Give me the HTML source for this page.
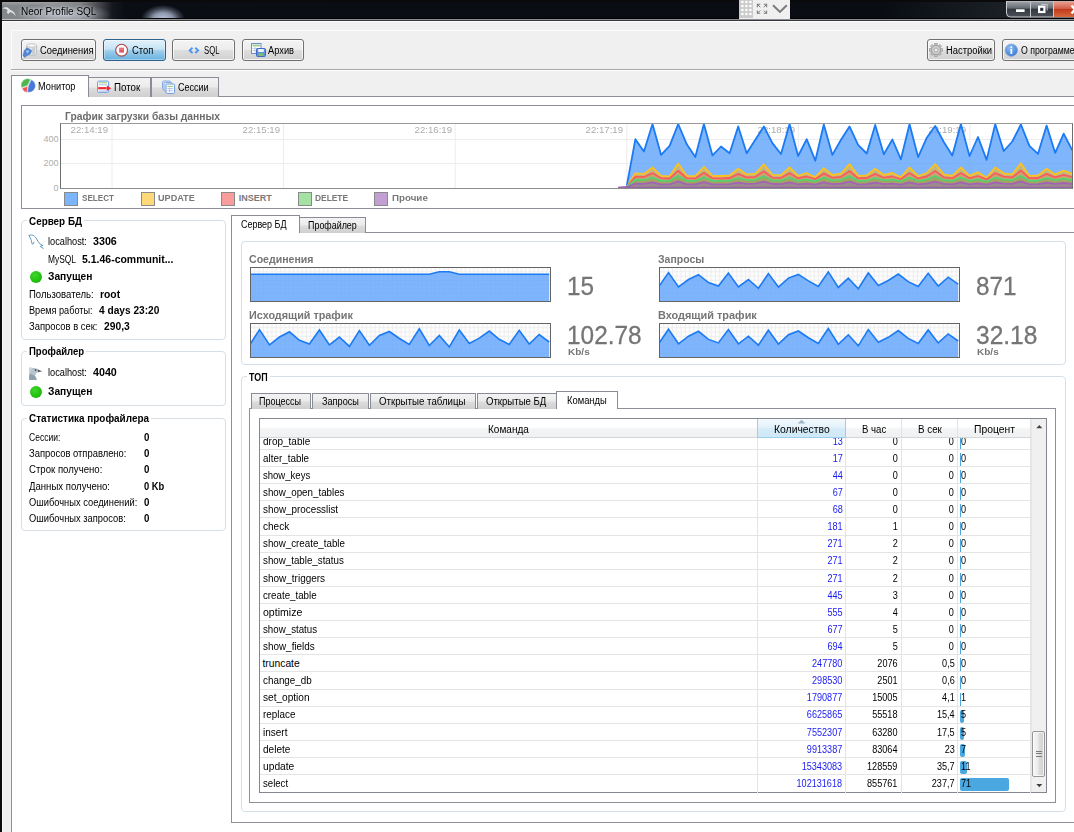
<!DOCTYPE html>
<html lang="ru"><head><meta charset="utf-8"><title>Neor Profile SQL</title>
<style>
html,body{margin:0;padding:0}
body{width:1074px;height:832px;overflow:hidden;position:relative;background:#f0f0f0;font-family:"Liberation Sans",sans-serif;font-size:10px;color:#000}
div,svg{position:absolute;box-sizing:border-box}
.t{position:absolute;white-space:nowrap;line-height:0;height:20px;display:block}
.t:before{content:"";display:inline-block;height:20px;width:0}
.btn{border:1px solid #707070;border-radius:3px;background:linear-gradient(#f4f4f4 0,#ececec 48%,#dedede 52%,#d1d1d1 100%);box-shadow:inset 0 0 0 1px rgba(255,255,255,.75)}
.btnhot{border:1px solid #2c628b;border-radius:3px;background:linear-gradient(#e4f2fb 0,#c6e3f6 45%,#9ccdec 55%,#6ab1dd 100%);box-shadow:inset 0 0 0 1px rgba(255,255,255,.35)}
.tab{border:1px solid #898c95;border-bottom:none;background:linear-gradient(#f3f3f3 0,#ebebeb 48%,#dddddd 52%,#cfcfcf 100%)}
.tabon{border:1px solid #898c95;border-bottom:none;background:#fff}
.grp{border:1px solid #d6dfe6;border-radius:4px}
.gt{background:#fff}
.sec{left:0;top:0;width:1074px;height:832px}
</style></head>
<body>
<div id="titlebar" class="sec">
<div style="left:0px;top:0px;width:1074px;height:19px;background:linear-gradient(to right,#84878a 0,#828589 55px,#76797d 80px,#4a4b4f 98px,#15181f 112px,#0a0d14 125px,#090c13 880px,#1a1e25 1000px,#1c2027 100%)"></div>
<div style="left:0px;top:2px;width:100px;height:4px;background:linear-gradient(rgba(255,255,255,.22),rgba(255,255,255,0));-webkit-mask-image:linear-gradient(to right,#000 60%,transparent)"></div>
<div style="left:0px;top:0px;width:1074px;height:2px;background:#0a0a0a"></div>
<div style="left:140px;top:4px;width:46px;height:15px;background:radial-gradient(ellipse 22px 14px at 50% 100%,rgba(196,204,224,.97) 0,rgba(170,184,208,.8) 45%,rgba(150,160,185,.35) 75%,rgba(120,130,150,0) 100%)"></div>
<div style="left:18px;top:4px;width:92px;height:15px;background:radial-gradient(ellipse at 50% 70%,rgba(225,232,248,.6) 0,rgba(225,232,248,0) 75%)"></div>
<div style="left:112px;top:18px;width:962px;height:1px;background:linear-gradient(to right,rgba(0,0,0,0) 0,#000 20px)"></div>
<div style="left:0px;top:19px;width:1074px;height:1px;background:linear-gradient(to right,#c4c4c4 0,#bcbcbc 85px,#8e8f92 125px,#8e8f92 100%)"></div>
<div style="left:0px;top:20px;width:1074px;height:1px;background:#34363a"></div>
<div style="left:0px;top:21px;width:1074px;height:1px;background:#fdfdfd"></div>
<div style="left:0px;top:0px;width:2px;height:832px;background:#0c0c0c"></div>
<div style="left:2px;top:22px;width:1px;height:810px;background:#fafafa"></div>
<svg style="left:2px;top:5px" width="15" height="13" viewBox="2 5 15 13"><path d="M2.200 8.600C4 7.500 6 6.900 7.400 7.500C8.600 8.100 9.400 9.300 10.400 9.900C12 10.500 13.600 11.500 14.600 13.100L15.700 16.600C14.600 14.400 13.400 13.200 11.600 12.500C10.600 12.100 9.800 12.100 9.300 12.700L8.500 14.100L6.700 12.700C7.600 11.700 7.800 10.500 7 9.600C5.800 8.800 4 8.800 2.200 8.600Z" fill="#e6eeec" opacity=".92"/></svg>
<span class="t" style="top:-5.3px;font-size:10.5px;color:#000;left:20.5px;transform:scaleX(0.950);transform-origin:0 0;text-shadow:0 0 4px rgba(255,255,255,.8);">Neor Profile SQL</span>
<div style="left:739px;top:0px;width:51px;height:19px;background:#f0f0f0"></div>
<svg style="left:739px;top:0" width="14" height="18" viewBox="0 0 14 18"><rect width="14" height="18" fill="#cbcbcb"/><rect x="2.3" y="0.9" width="2.2" height="2.2" fill="#fff"/><rect x="6.3" y="0.9" width="2.2" height="2.2" fill="#fff"/><rect x="10.3" y="0.9" width="2.2" height="2.2" fill="#fff"/><rect x="2.3" y="4.9" width="2.2" height="2.2" fill="#fff"/><rect x="6.3" y="4.9" width="2.2" height="2.2" fill="#fff"/><rect x="10.3" y="4.9" width="2.2" height="2.2" fill="#fff"/><rect x="2.3" y="8.9" width="2.2" height="2.2" fill="#fff"/><rect x="6.3" y="8.9" width="2.2" height="2.2" fill="#fff"/><rect x="10.3" y="8.9" width="2.2" height="2.2" fill="#fff"/><rect x="2.3" y="12.9" width="2.2" height="2.2" fill="#fff"/><rect x="6.3" y="12.9" width="2.2" height="2.2" fill="#fff"/><rect x="10.3" y="12.9" width="2.2" height="2.2" fill="#fff"/></svg>
<svg style="left:756px;top:3px" width="12" height="12" viewBox="756 3 12 12" fill="none" stroke="#7c7c7c" stroke-width="1.100"><path d="M757.400 7.200V4.300h2.900M763.700 4.300h2.900v2.900M766.600 10.400v2.900h-2.900M760.300 13.300h-2.900v-2.900"/><path d="M757.600 4.500l2.700 2.700M766.400 4.500l-2.700 2.700M766.400 13.100l-2.700-2.700M757.600 13.100l2.700-2.700" stroke-width="1"/></svg>
<svg style="left:772px;top:4px" width="16" height="10" viewBox="0 0 16 10" fill="none" stroke="#7a7a7a" stroke-width="2"><path d="M1 1.3l6.9 6.6L14.8 1.3"/></svg>
<svg style="left:1006px;top:1px" width="68" height="17" viewBox="0 0 68 17"><defs><linearGradient id="wg" x1="0" y1="0" x2="0" y2="1"><stop offset="0" stop-color="#a2a6ac"/><stop offset=".45" stop-color="#666a72"/><stop offset=".5" stop-color="#32363e"/><stop offset="1" stop-color="#4c5058"/></linearGradient><linearGradient id="wr" x1="0" y1="0" x2="0" y2="1"><stop offset="0" stop-color="#e9a08f"/><stop offset=".45" stop-color="#d4604a"/><stop offset=".5" stop-color="#c03a1e"/><stop offset="1" stop-color="#d9683a"/></linearGradient></defs><path d="M0.5 0H68V16H4.5Q0.5 16 0.5 12Z" fill="url(#wg)" stroke="#c9ccd0" stroke-width="1"/><rect x="48" y="0.5" width="20" height="15.5" fill="url(#wr)"/><path d="M24.5 0.5V16M47.5 0.5V16" stroke="#c9ccd0" stroke-width="1"/><rect x="10" y="8.300" width="8.600" height="2.700" fill="#fff"/><path d="M35 3.400h6.200v6.200" fill="none" stroke="#e0e2e6" stroke-width=".9" opacity=".8"/><rect x="33.100" y="5.700" width="5.300" height="5.300" fill="#2a2e38" stroke="#fff" stroke-width="2.200"/><path d="M65.500 4.500l7 8M72.500 4.500l-7 8" stroke="#fff" stroke-width="2.400"/></svg>
</div>
<div id="toolbar" class="sec">
<div style="left:11px;top:30px;width:1063px;height:1px;background:#fbfbfb"></div>
<div style="left:11px;top:30px;width:1px;height:40px;background:#fbfbfb"></div>
<div style="left:11px;top:69px;width:1063px;height:1px;background:#a9a9a9"></div>
<div style="left:11px;top:70px;width:1063px;height:1px;background:#fdfdfd"></div>
<div class="btn" style="left:21px;top:39px;width:75px;height:22px;"></div>
<div class="btnhot" style="left:103px;top:39px;width:63px;height:22px;"></div>
<div class="btn" style="left:172px;top:39px;width:63px;height:22px;"></div>
<div class="btn" style="left:242px;top:39px;width:62px;height:22px;"></div>
<div class="btn" style="left:927px;top:39px;width:68px;height:22px;"></div>
<div class="btn" style="left:1002px;top:39px;width:80px;height:22px;"></div>
<span class="t" style="top:33.6px;font-size:10px;left:39.5px;transform:scaleX(0.936);transform-origin:0 0;">Соединения</span>
<span class="t" style="top:33.6px;font-size:10px;left:131.5px;transform:scaleX(0.940);transform-origin:0 0;">Стоп</span>
<span class="t" style="top:33.6px;font-size:10px;left:203.6px;transform:scaleX(0.770);transform-origin:0 0;">SQL</span>
<span class="t" style="top:33.6px;font-size:10px;left:268.0px;transform:scaleX(0.928);transform-origin:0 0;">Архив</span>
<span class="t" style="top:33.6px;font-size:10px;left:945.9px;transform:scaleX(0.940);transform-origin:0 0;">Настройки</span>
<span class="t" style="top:33.6px;font-size:10px;left:1021.3px;transform:scaleX(0.876);transform-origin:0 0;">О программе</span>
<svg style="left:22px;top:43px" width="16" height="15" viewBox="0 0 16 15"><path d="M4.6 2.4v8.2c0 1 2.2 1.7 5 1.7s5-.7 5-1.7V2.4z" fill="#e4e6e9" stroke="#a9adb3" stroke-width=".7"/><ellipse cx="9.6" cy="2.5" rx="5" ry="1.7" fill="#f8f9fa" stroke="#a9adb3" stroke-width=".7"/><path d="M10.2 5.2l2.6-.4v6l-2.6.6z" fill="#c6cacf"/><path d="M1 12.6l1.6-5.4 2.4-2.4 4.6 2.6-1 3.2-4.2 2.4-1.6 1.4z" fill="#4f86d6" stroke="#3568b8" stroke-width=".5"/><path d="M3.6 8l2.4-1 1.4 1.6-2.2 2z" fill="#9cc0f0"/></svg>
<svg style="left:114px;top:43px" width="15" height="15" viewBox="0 0 15 15"><circle cx="7.6" cy="7.2" r="5.9" fill="#fff" stroke="#a84848" stroke-width="1.1"/><rect x="5.2" y="4.8" width="4.8" height="4.8" fill="#e4566a"/><rect x="5.2" y="4.8" width="4.8" height="2.2" fill="#ee7c8a" opacity=".7"/></svg>
<svg style="left:188px;top:46px" width="12" height="9" viewBox="0 0 12 9" fill="none" stroke="#4a96f2" stroke-width="1.900"><path d="M4.500 1.700L1.700 4.400l2.800 2.700M7.300 1.700l2.800 2.700-2.800 2.700"/></svg>
<svg style="left:251px;top:43px" width="15" height="14" viewBox="0 0 15 14"><rect x=".5" y=".5" width="9.5" height="10" fill="#fff" stroke="#6f8fc8"/><rect x="1.5" y="1.5" width="7.5" height="2" fill="#9cd38c"/><path d="M1.5 5.5h7.5M1.5 7.5h7.5M4 4v6" stroke="#b8c8e4" stroke-width=".8"/><rect x="5.5" y="5.5" width="9" height="8" rx="1" fill="#5f8fdc" stroke="#3e6cc0"/><rect x="7.2" y="6" width="5.6" height="3" fill="#eef3fb"/><rect x="7.6" y="10.3" width="4.8" height="2.6" fill="#7ec46a"/></svg>
<svg style="left:929px;top:43px" width="14" height="14" viewBox="-7 -7 14 14"><rect x="-1.3" y="-6.6" width="2.6" height="3" transform="rotate(0)" fill="#bdbdbd" stroke="#8f8f8f" stroke-width=".5"/><rect x="-1.3" y="-6.6" width="2.6" height="3" transform="rotate(45)" fill="#bdbdbd" stroke="#8f8f8f" stroke-width=".5"/><rect x="-1.3" y="-6.6" width="2.6" height="3" transform="rotate(90)" fill="#bdbdbd" stroke="#8f8f8f" stroke-width=".5"/><rect x="-1.3" y="-6.6" width="2.6" height="3" transform="rotate(135)" fill="#bdbdbd" stroke="#8f8f8f" stroke-width=".5"/><rect x="-1.3" y="-6.6" width="2.6" height="3" transform="rotate(180)" fill="#bdbdbd" stroke="#8f8f8f" stroke-width=".5"/><rect x="-1.3" y="-6.6" width="2.6" height="3" transform="rotate(225)" fill="#bdbdbd" stroke="#8f8f8f" stroke-width=".5"/><rect x="-1.3" y="-6.6" width="2.6" height="3" transform="rotate(270)" fill="#bdbdbd" stroke="#8f8f8f" stroke-width=".5"/><rect x="-1.3" y="-6.6" width="2.6" height="3" transform="rotate(315)" fill="#bdbdbd" stroke="#8f8f8f" stroke-width=".5"/><circle r="4.6" fill="#cfcfcf" stroke="#8f8f8f" stroke-width=".7"/><circle r="2" fill="#f0f0f0" stroke="#8f8f8f" stroke-width=".7"/></svg>
<svg style="left:1004px;top:43px" width="15" height="15" viewBox="0 0 15 15"><defs><radialGradient id="ig" cx=".4" cy=".3" r=".8"><stop offset="0" stop-color="#8fc0f4"/><stop offset="1" stop-color="#2f6fd0"/></radialGradient></defs><circle cx="7.3" cy="7.2" r="6.2" fill="url(#ig)" stroke="#8fa8d8" stroke-width=".8"/><rect x="6.5" y="6" width="1.7" height="5" fill="#fff"/><rect x="6.5" y="3.4" width="1.7" height="1.7" fill="#fff"/></svg>
</div>
<div id="main-tabs" class="sec">
<div style="left:11px;top:96px;width:1070px;height:745px;background:#fff;border:1px solid #8e8f98"></div>
<div class="tab" style="left:88px;top:77px;width:63px;height:20px;"></div>
<div class="tab" style="left:151px;top:77px;width:68px;height:20px;"></div>
<div class="tabon" style="left:11px;top:75px;width:78px;height:22px;"></div>
<span class="t" style="top:70.0px;font-size:10px;left:38.2px;transform:scaleX(0.921);transform-origin:0 0;">Монитор</span>
<span class="t" style="top:70.5px;font-size:10px;left:113.6px;transform:scaleX(0.976);transform-origin:0 0;">Поток</span>
<span class="t" style="top:70.5px;font-size:10px;left:177.6px;transform:scaleX(0.901);transform-origin:0 0;">Сессии</span>
<svg style="left:20px;top:78px" width="17" height="16" viewBox="20 78 17 16"><path d="M27.600 85.200L21.700 87.400A6.300 6.300 0 0 1 30.300 79.500Z" fill="#4db74d" stroke="#8fd68f" stroke-width=".5"/><path d="M28.700 85.700L31.300 79.900A6.300 6.300 0 0 1 27.600 91.900Z" fill="#4a78d8" stroke="#86a8ea" stroke-width=".5"/><path d="M27.400 86.600L22.300 88.400A6 6 0 0 0 26.700 92.300Z" fill="#ee5252" stroke="#f59a9a" stroke-width=".5"/></svg>
<svg style="left:96px;top:79px" width="17" height="15" viewBox="96 79 17 15"><rect x="97.600" y="81.100" width="11" height="11.200" rx="1" fill="#fff" stroke="#6c9ae0" stroke-width="1"/><path d="M99 82.800h8.200" stroke="#8ccf78" stroke-width="1"/><path d="M99 84.800h8.200M99 91h8.200" stroke="#9db8e8" stroke-width=".9"/><path d="M98.200 88.200h8.400" stroke="#f02632" stroke-width="2.200"/><path d="M106.800 85.600l4.400 2.700-4.400 2.700z" fill="#f02632"/></svg>
<svg style="left:161px;top:80px" width="15" height="15" viewBox="161 80 15 15"><rect x="162.500" y="81" width="8" height="8.600" rx="1.200" fill="#dfe9f8" stroke="#7ea4de" stroke-width=".9"/><rect x="164" y="82.400" width="8" height="8.800" rx="1.200" fill="#dfe9f8" stroke="#7ea4de" stroke-width=".9"/><rect x="166" y="84" width="8.600" height="9.400" rx="1.200" fill="#fff" stroke="#6c98da" stroke-width="1"/><path d="M167.400 86.400h5.800" stroke="#8fd07c" stroke-width="1.100"/><path d="M167.400 88.600h5.800M167.400 90.800h5.800M169.600 87.600v4.400" stroke="#a8c0ea" stroke-width=".9"/></svg>
</div>
<div id="load-chart" class="sec">
<div style="left:21px;top:105px;width:1060px;height:104px;border:1px solid #8d8e99;background:#fff"></div>
<span class="t" style="top:100.0px;font-size:10px;font-weight:bold;color:#6c6c6c;left:64.5px;transform:scaleX(1.028);transform-origin:0 0;">График загрузки базы данных</span>
<span class="t" style="top:112.8px;font-size:9px;color:#adadad;right:965.5px;transform:scaleX(1.070);transform-origin:100% 0;">22:14:19</span>
<span class="t" style="top:112.8px;font-size:9px;color:#adadad;right:793.9px;transform:scaleX(1.070);transform-origin:100% 0;">22:15:19</span>
<span class="t" style="top:112.8px;font-size:9px;color:#adadad;right:622.3px;transform:scaleX(1.070);transform-origin:100% 0;">22:16:19</span>
<span class="t" style="top:112.8px;font-size:9px;color:#adadad;right:450.7px;transform:scaleX(1.070);transform-origin:100% 0;">22:17:19</span>
<span class="t" style="top:112.8px;font-size:9px;color:#adadad;right:279.1px;transform:scaleX(1.070);transform-origin:100% 0;">22:18:19</span>
<span class="t" style="top:112.8px;font-size:9px;color:#adadad;right:107.5px;transform:scaleX(1.070);transform-origin:100% 0;">22:19:19</span>
<span class="t" style="top:122.2px;font-size:9px;color:#adadad;right:1015.5px;">400</span>
<span class="t" style="top:146.3px;font-size:9px;color:#adadad;right:1015.5px;">200</span>
<span class="t" style="top:170.8px;font-size:9px;color:#adadad;right:1015.5px;">0</span>
<svg style="left:60px;top:123px" width="1014" height="67" viewBox="60 123 1014 67"><path d="M112 124V188" stroke="#ececec" stroke-width="1"/><path d="M283.6 124V188" stroke="#ececec" stroke-width="1"/><path d="M455.2 124V188" stroke="#ececec" stroke-width="1"/><path d="M626.8 124V188" stroke="#ececec" stroke-width="1"/><path d="M798.4 124V188" stroke="#ececec" stroke-width="1"/><path d="M970 124V188" stroke="#ececec" stroke-width="1"/><path d="M61 139.5H1072" stroke="#ececec" stroke-width="1"/><path d="M61 163.5H1072" stroke="#ececec" stroke-width="1"/><polygon points="626.8,185.6 635.4,139.2 643.9,151.5 652.5,124.1 661.1,154.9 669.6,145.9 678.2,124.0 686.8,144.3 695.3,157.1 703.9,124.0 712.5,155.4 721.0,146.5 729.6,153.2 738.2,126.4 746.7,153.2 755.3,139.8 763.9,126.4 772.4,143.1 781.0,154.0 789.6,124.1 798.1,156.0 806.7,139.2 815.3,160.7 823.8,124.5 832.4,154.9 841.0,139.8 849.5,126.4 858.1,144.8 866.7,153.5 875.2,124.9 883.8,154.3 892.4,139.5 900.9,159.3 909.5,124.1 918.1,157.1 926.6,138.1 935.2,126.0 943.8,142.0 952.3,155.4 960.9,124.1 969.5,156.0 978.0,137.0 986.6,159.9 995.2,124.1 1003.7,151.0 1012.3,141.5 1020.9,124.5 1029.4,145.9 1038.0,153.8 1046.6,125.6 1055.2,152.9 1063.7,133.6 1072.3,150.4 1072.3,188.2 626.8,188.2" fill="rgba(94,162,250,.8)"/><polyline points="626.8,185.6 635.4,139.2 643.9,151.5 652.5,124.1 661.1,154.9 669.6,145.9 678.2,124.0 686.8,144.3 695.3,157.1 703.9,124.0 712.5,155.4 721.0,146.5 729.6,153.2 738.2,126.4 746.7,153.2 755.3,139.8 763.9,126.4 772.4,143.1 781.0,154.0 789.6,124.1 798.1,156.0 806.7,139.2 815.3,160.7 823.8,124.5 832.4,154.9 841.0,139.8 849.5,126.4 858.1,144.8 866.7,153.5 875.2,124.9 883.8,154.3 892.4,139.5 900.9,159.3 909.5,124.1 918.1,157.1 926.6,138.1 935.2,126.0 943.8,142.0 952.3,155.4 960.9,124.1 969.5,156.0 978.0,137.0 986.6,159.9 995.2,124.1 1003.7,151.0 1012.3,141.5 1020.9,124.5 1029.4,145.9 1038.0,153.8 1046.6,125.6 1055.2,152.9 1063.7,133.6 1072.3,150.4" fill="none" stroke="#1b7af4" stroke-width="1.8" stroke-linejoin="round"/><polygon points="626.8,187.0 635.4,173.3 643.9,173.9 652.5,167.5 661.1,175.9 669.6,176.3 678.2,163.6 686.8,175.9 695.3,176.1 703.9,167.0 712.5,175.9 721.0,176.0 729.6,175.5 738.2,168.8 746.7,174.4 755.3,173.6 763.9,164.4 772.4,174.8 781.0,175.2 789.6,167.5 798.1,175.9 806.7,173.0 815.3,177.2 823.8,168.1 832.4,175.0 841.0,173.6 849.5,164.1 858.1,175.9 866.7,175.5 875.2,168.8 883.8,175.0 892.4,173.0 900.9,177.2 909.5,167.5 918.1,176.1 926.6,173.0 935.2,164.0 943.8,174.4 952.3,175.9 960.9,167.5 969.5,175.9 978.0,172.2 986.6,177.8 995.2,167.5 1003.7,173.3 1012.3,174.4 1020.9,163.3 1029.4,175.9 1038.0,175.5 1046.6,168.8 1055.2,174.4 1063.7,170.5 1072.3,173.9 1072.3,188.2 626.8,188.2" fill="#c3b97e"/><polyline points="626.8,187.0 635.4,173.3 643.9,173.9 652.5,167.5 661.1,175.9 669.6,176.3 678.2,163.6 686.8,175.9 695.3,176.1 703.9,167.0 712.5,175.9 721.0,176.0 729.6,175.5 738.2,168.8 746.7,174.4 755.3,173.6 763.9,164.4 772.4,174.8 781.0,175.2 789.6,167.5 798.1,175.9 806.7,173.0 815.3,177.2 823.8,168.1 832.4,175.0 841.0,173.6 849.5,164.1 858.1,175.9 866.7,175.5 875.2,168.8 883.8,175.0 892.4,173.0 900.9,177.2 909.5,167.5 918.1,176.1 926.6,173.0 935.2,164.0 943.8,174.4 952.3,175.9 960.9,167.5 969.5,175.9 978.0,172.2 986.6,177.8 995.2,167.5 1003.7,173.3 1012.3,174.4 1020.9,163.3 1029.4,175.9 1038.0,175.5 1046.6,168.8 1055.2,174.4 1063.7,170.5 1072.3,173.9" fill="none" stroke="#fbc220" stroke-width="1.8" stroke-linejoin="round"/><polygon points="626.8,187.0 635.4,176.6 643.9,177.0 652.5,173.1 661.1,178.2 669.6,178.5 678.2,170.7 686.8,178.2 695.3,178.4 703.9,172.8 712.5,178.2 721.0,178.3 729.6,178.0 738.2,173.9 746.7,177.3 755.3,176.8 763.9,171.2 772.4,177.6 781.0,177.8 789.6,173.1 798.1,178.2 806.7,176.5 815.3,179.0 823.8,173.4 832.4,177.7 841.0,176.8 849.5,171.0 858.1,178.2 866.7,178.0 875.2,173.9 883.8,177.7 892.4,176.5 900.9,179.0 909.5,173.1 918.1,178.4 926.6,176.5 935.2,170.9 943.8,177.3 952.3,178.2 960.9,173.1 969.5,178.2 978.0,176.0 986.6,179.4 995.2,173.1 1003.7,176.6 1012.3,177.3 1020.9,170.5 1029.4,178.2 1038.0,178.0 1046.6,173.9 1055.2,177.3 1063.7,174.9 1072.3,177.0 1072.3,188.2 626.8,188.2" fill="#cfa070"/><polyline points="626.8,187.0 635.4,176.6 643.9,177.0 652.5,173.1 661.1,178.2 669.6,178.5 678.2,170.7 686.8,178.2 695.3,178.4 703.9,172.8 712.5,178.2 721.0,178.3 729.6,178.0 738.2,173.9 746.7,177.3 755.3,176.8 763.9,171.2 772.4,177.6 781.0,177.8 789.6,173.1 798.1,178.2 806.7,176.5 815.3,179.0 823.8,173.4 832.4,177.7 841.0,176.8 849.5,171.0 858.1,178.2 866.7,178.0 875.2,173.9 883.8,177.7 892.4,176.5 900.9,179.0 909.5,173.1 918.1,178.4 926.6,176.5 935.2,170.9 943.8,177.3 952.3,178.2 960.9,173.1 969.5,178.2 978.0,176.0 986.6,179.4 995.2,173.1 1003.7,176.6 1012.3,177.3 1020.9,170.5 1029.4,178.2 1038.0,178.0 1046.6,173.9 1055.2,177.3 1063.7,174.9 1072.3,177.0" fill="none" stroke="#f85c5c" stroke-width="1.8" stroke-linejoin="round"/><polygon points="626.8,187.0 635.4,179.7 643.9,180.0 652.5,177.5 661.1,180.8 669.6,180.9 678.2,175.9 686.8,180.8 695.3,180.8 703.9,177.3 712.5,180.8 721.0,180.8 729.6,180.6 738.2,178.0 746.7,180.2 755.3,179.9 763.9,176.2 772.4,180.3 781.0,180.5 789.6,177.5 798.1,180.8 806.7,179.6 815.3,181.3 823.8,177.7 832.4,180.4 841.0,179.9 849.5,176.1 858.1,180.8 866.7,180.6 875.2,178.0 883.8,180.4 892.4,179.6 900.9,181.3 909.5,177.5 918.1,180.8 926.6,179.6 935.2,176.1 943.8,180.2 952.3,180.8 960.9,177.5 969.5,180.8 978.0,179.3 986.6,181.5 995.2,177.5 1003.7,179.7 1012.3,180.2 1020.9,175.8 1029.4,180.8 1038.0,180.6 1046.6,178.0 1055.2,180.2 1063.7,178.6 1072.3,180.0 1072.3,188.2 626.8,188.2" fill="#a3a362"/><polyline points="626.8,187.0 635.4,179.7 643.9,180.0 652.5,177.5 661.1,180.8 669.6,180.9 678.2,175.9 686.8,180.8 695.3,180.8 703.9,177.3 712.5,180.8 721.0,180.8 729.6,180.6 738.2,178.0 746.7,180.2 755.3,179.9 763.9,176.2 772.4,180.3 781.0,180.5 789.6,177.5 798.1,180.8 806.7,179.6 815.3,181.3 823.8,177.7 832.4,180.4 841.0,179.9 849.5,176.1 858.1,180.8 866.7,180.6 875.2,178.0 883.8,180.4 892.4,179.6 900.9,181.3 909.5,177.5 918.1,180.8 926.6,179.6 935.2,176.1 943.8,180.2 952.3,180.8 960.9,177.5 969.5,180.8 978.0,179.3 986.6,181.5 995.2,177.5 1003.7,179.7 1012.3,180.2 1020.9,175.8 1029.4,180.8 1038.0,180.6 1046.6,178.0 1055.2,180.2 1063.7,178.6 1072.3,180.0" fill="none" stroke="#55d170" stroke-width="1.8" stroke-linejoin="round"/><polygon points="618.0,187.9 626.8,187.0 635.4,183.7 643.9,183.8 652.5,182.3 661.1,184.3 669.6,184.4 678.2,181.4 686.8,184.3 695.3,184.3 703.9,182.2 712.5,184.3 721.0,184.3 729.6,184.2 738.2,182.6 746.7,183.9 755.3,183.7 763.9,181.6 772.4,184.0 781.0,184.1 789.6,182.3 798.1,184.3 806.7,183.6 815.3,184.6 823.8,182.4 832.4,184.1 841.0,183.7 849.5,181.5 858.1,184.3 866.7,184.2 875.2,182.6 883.8,184.1 892.4,183.6 900.9,184.6 909.5,182.3 918.1,184.3 926.6,183.6 935.2,181.5 943.8,183.9 952.3,184.3 960.9,182.3 969.5,184.3 978.0,183.4 986.6,184.7 995.2,182.3 1003.7,183.7 1012.3,183.9 1020.9,181.3 1029.4,184.3 1038.0,184.2 1046.6,182.6 1055.2,183.9 1063.7,183.0 1072.3,183.8 1072.3,188.2 626.8,188.2" fill="#9d8a8c"/><polyline points="618.0,187.9 626.8,187.0 635.4,183.7 643.9,183.8 652.5,182.3 661.1,184.3 669.6,184.4 678.2,181.4 686.8,184.3 695.3,184.3 703.9,182.2 712.5,184.3 721.0,184.3 729.6,184.2 738.2,182.6 746.7,183.9 755.3,183.7 763.9,181.6 772.4,184.0 781.0,184.1 789.6,182.3 798.1,184.3 806.7,183.6 815.3,184.6 823.8,182.4 832.4,184.1 841.0,183.7 849.5,181.5 858.1,184.3 866.7,184.2 875.2,182.6 883.8,184.1 892.4,183.6 900.9,184.6 909.5,182.3 918.1,184.3 926.6,183.6 935.2,181.5 943.8,183.9 952.3,184.3 960.9,182.3 969.5,184.3 978.0,183.4 986.6,184.7 995.2,182.3 1003.7,183.7 1012.3,183.9 1020.9,181.3 1029.4,184.3 1038.0,184.2 1046.6,182.6 1055.2,183.9 1063.7,183.0 1072.3,183.8" fill="none" stroke="#a262b8" stroke-width="1.8" stroke-linejoin="round"/><path d="M618 187.4H1072" stroke="#9466a6" stroke-width="1.2"/></svg>
<div style="left:60px;top:123px;width:1013px;height:66px;border:1px solid #6e6e6e;border-top-color:#9a9a9a;border-bottom-color:#8c8c8c"></div>
<div style="left:64px;top:192px;width:14px;height:14px;background:#7db5fb;border:1px solid #8a8a8a"></div>
<span class="t" style="top:181.2px;font-size:9px;font-weight:bold;color:#787878;left:82.0px;transform:scaleX(0.901);transform-origin:0 0;">SELECT</span>
<div style="left:141px;top:192px;width:14px;height:14px;background:#fdd978;border:1px solid #8a8a8a"></div>
<span class="t" style="top:181.2px;font-size:9px;font-weight:bold;color:#787878;left:158.3px;transform:scaleX(1.010);transform-origin:0 0;">UPDATE</span>
<div style="left:221px;top:192px;width:14px;height:14px;background:#fb9c9c;border:1px solid #8a8a8a"></div>
<span class="t" style="top:181.2px;font-size:9px;font-weight:bold;color:#787878;left:238.8px;">INSERT</span>
<div style="left:298px;top:192px;width:14px;height:14px;background:#a4e2a4;border:1px solid #8a8a8a"></div>
<span class="t" style="top:181.2px;font-size:9px;font-weight:bold;color:#787878;left:315.3px;transform:scaleX(0.932);transform-origin:0 0;">DELETE</span>
<div style="left:374px;top:192px;width:14px;height:14px;background:#c3a0d3;border:1px solid #8a8a8a"></div>
<span class="t" style="top:181.2px;font-size:9px;font-weight:bold;color:#787878;left:391.6px;transform:scaleX(1.085);transform-origin:0 0;">Прочие</span>
</div>
<div id="left-panels" class="sec">
<div class="grp" style="left:21px;top:220px;width:205px;height:120px;"></div>
<div class="gt" style="left:26.6px;top:216px;width:57px;height:9px;"></div>
<span class="t" style="top:204.7px;font-size:10px;font-weight:bold;left:28.6px;transform:scaleX(0.988);transform-origin:0 0;">Сервер БД</span>
<div class="grp" style="left:21px;top:351px;width:205px;height:55px;"></div>
<div class="gt" style="left:26.6px;top:347px;width:59.2px;height:9px;"></div>
<span class="t" style="top:335.4px;font-size:10px;font-weight:bold;left:28.6px;transform:scaleX(0.956);transform-origin:0 0;">Профайлер</span>
<div class="grp" style="left:21px;top:418px;width:205px;height:113px;"></div>
<div class="gt" style="left:26.6px;top:414px;width:124px;height:9px;"></div>
<span class="t" style="top:401.8px;font-size:10px;font-weight:bold;left:28.6px;transform:scaleX(0.993);transform-origin:0 0;">Статистика профайлера</span>
<span class="t" style="top:224.8px;font-size:10px;left:47.6px;transform:scaleX(0.921);transform-origin:0 0;">localhost:</span>
<span class="t" style="top:224.8px;font-size:10px;font-weight:bold;left:92.7px;transform:scaleX(1.070);transform-origin:0 0;">3306</span>
<span class="t" style="top:242.7px;font-size:10px;left:47.6px;transform:scaleX(0.840);transform-origin:0 0;">MySQL</span>
<span class="t" style="top:242.7px;font-size:10px;font-weight:bold;left:81.6px;transform:scaleX(1.048);transform-origin:0 0;">5.1.46-communit...</span>
<span class="t" style="top:259.9px;font-size:10px;font-weight:bold;left:48.0px;transform:scaleX(1.021);transform-origin:0 0;">Запущен</span>
<span class="t" style="top:277.5px;font-size:10px;left:28.6px;transform:scaleX(0.955);transform-origin:0 0;">Пользователь:</span>
<span class="t" style="top:277.5px;font-size:10px;font-weight:bold;left:99.9px;transform:scaleX(1.034);transform-origin:0 0;">root</span>
<span class="t" style="top:294.0px;font-size:10px;left:28.6px;transform:scaleX(0.914);transform-origin:0 0;">Время работы:</span>
<span class="t" style="top:294.0px;font-size:10px;font-weight:bold;left:98.8px;transform:scaleX(1.014);transform-origin:0 0;">4 days 23:20</span>
<span class="t" style="top:310.4px;font-size:10px;left:28.6px;transform:scaleX(0.941);transform-origin:0 0;">Запросов в сек:</span>
<span class="t" style="top:310.4px;font-size:10px;font-weight:bold;left:103.5px;transform:scaleX(1.027);transform-origin:0 0;">290,3</span>
<span class="t" style="top:355.5px;font-size:10px;left:47.6px;transform:scaleX(0.921);transform-origin:0 0;">localhost:</span>
<span class="t" style="top:355.5px;font-size:10px;font-weight:bold;left:92.7px;transform:scaleX(1.070);transform-origin:0 0;">4040</span>
<span class="t" style="top:374.5px;font-size:10px;font-weight:bold;left:48.0px;transform:scaleX(1.021);transform-origin:0 0;">Запущен</span>
<div style="left:29.799999999999997px;top:271px;width:12px;height:12px;border-radius:50%;background:radial-gradient(circle at 40% 35%,#3fd62a 0,#22c010 60%,#1aa80c 100%)"></div>
<div style="left:29.799999999999997px;top:385.6px;width:12px;height:12px;border-radius:50%;background:radial-gradient(circle at 40% 35%,#3fd62a 0,#22c010 60%,#1aa80c 100%)"></div>
<span class="t" style="top:420.8px;font-size:10px;left:28.6px;transform:scaleX(0.852);transform-origin:0 0;">Сессии:</span>
<span class="t" style="top:420.8px;font-size:10px;font-weight:bold;left:143.7px;transform:scaleX(0.971);transform-origin:0 0;">0</span>
<span class="t" style="top:437.1px;font-size:10px;left:28.6px;transform:scaleX(0.939);transform-origin:0 0;">Запросов отправлено:</span>
<span class="t" style="top:437.1px;font-size:10px;font-weight:bold;left:143.7px;transform:scaleX(0.971);transform-origin:0 0;">0</span>
<span class="t" style="top:453.4px;font-size:10px;left:28.6px;transform:scaleX(0.961);transform-origin:0 0;">Строк получено:</span>
<span class="t" style="top:453.4px;font-size:10px;font-weight:bold;left:143.7px;transform:scaleX(0.971);transform-origin:0 0;">0</span>
<span class="t" style="top:469.7px;font-size:10px;left:28.6px;transform:scaleX(0.958);transform-origin:0 0;">Данных получено:</span>
<span class="t" style="top:469.7px;font-size:10px;font-weight:bold;left:143.7px;transform:scaleX(0.937);transform-origin:0 0;">0 Kb</span>
<span class="t" style="top:486.0px;font-size:10px;left:28.6px;transform:scaleX(0.932);transform-origin:0 0;">Ошибочных соединений:</span>
<span class="t" style="top:486.0px;font-size:10px;font-weight:bold;left:143.7px;transform:scaleX(0.971);transform-origin:0 0;">0</span>
<span class="t" style="top:502.3px;font-size:10px;left:28.6px;transform:scaleX(0.934);transform-origin:0 0;">Ошибочных запросов:</span>
<span class="t" style="top:502.3px;font-size:10px;font-weight:bold;left:143.7px;transform:scaleX(0.971);transform-origin:0 0;">0</span>
<svg style="left:28px;top:233px" width="17" height="17" viewBox="28 233 17 17" fill="none" stroke="#3f86b0" stroke-width=".95" stroke-linecap="round" stroke-linejoin="round" opacity=".92"><path d="M29 235.400C31.200 234.400 34.200 235 36.200 238.200C37.600 240.600 38.400 242.600 40 243.800L42.600 245.500"/><path d="M42.800 245.300L40.300 246.500L43.200 248.400"/><path d="M29.300 235.700C29.800 237.600 30.900 239 31.400 240.600C31.500 242.200 31.800 243.600 32.700 244.300L33.900 242.200"/></svg>
<svg style="left:28px;top:366px" width="16" height="15" viewBox="28 366 16 15"><path d="M29.200 367.400L34 367.900L37.600 368.700L39 370L38 372L36 373.600L35 376L37 379.700L29.200 379.900Z" fill="#b4c4d0"/><path d="M29.200 373L35 376L37 379.700L29.200 379.900Z" fill="#8fa0ac"/><path d="M29.200 367.400L32 367.700L29.200 376Z" fill="#c8d6e0"/><path d="M37.800 369.600L42.200 371.200L38 372.200Z" fill="#5a5856"/><circle cx="35.600" cy="370" r=".9" fill="#4a4e55"/></svg>
</div>
<div id="server-pane" class="sec">
<div style="left:231px;top:232px;width:860px;height:591px;background:#fff;border:1px solid #8e8f98"></div>
<div class="tab" style="left:299px;top:217px;width:67px;height:16px;"></div>
<div class="tabon" style="left:231px;top:215px;width:69px;height:18px;"></div>
<span class="t" style="top:208.3px;font-size:10px;left:241.0px;transform:scaleX(0.896);transform-origin:0 0;">Сервер БД</span>
<span class="t" style="top:209.0px;font-size:10px;left:308.0px;transform:scaleX(0.893);transform-origin:0 0;">Профайлер</span>
<div class="grp" style="left:241px;top:241px;width:825px;height:124px;"></div>
<span class="t" style="top:243.4px;font-size:11px;font-weight:bold;color:#757575;left:249.2px;transform:scaleX(0.960);transform-origin:0 0;">Соединения</span>
<svg style="left:250px;top:267px" width="301" height="35" viewBox="250 267 301 35"><defs><pattern id="g250" x="251" y="268" width="4.3" height="4.3" patternUnits="userSpaceOnUse"><rect width="4.3" height="4.3" fill="#fdfdfd"/><path d="M3.8 0V4.3M0 3.8H4.3" stroke="#eeeeee" stroke-width="1"/></pattern></defs><rect x="250" y="267" width="301" height="35" fill="url(#g250)"/><polygon points="249.5,274.2 259.5,274.2 269.5,274.2 279.5,274.2 289.5,274.2 299.4,274.2 309.4,274.2 319.4,274.2 329.4,274.2 339.4,274.2 349.4,274.2 359.4,274.2 369.4,274.2 379.4,274.2 389.4,274.2 399.4,274.2 409.3,274.2 419.3,274.2 429.3,274.2 439.3,271.7 449.3,271.7 459.3,274.2 469.3,274.2 479.3,274.2 489.3,274.2 499.2,274.2 509.2,274.2 519.2,274.2 529.2,274.2 539.2,274.2 549.2,274.2 549.2,302 249.5,302" fill="rgba(98,165,251,.82)"/><polyline points="249.5,274.2 259.5,274.2 269.5,274.2 279.5,274.2 289.5,274.2 299.4,274.2 309.4,274.2 319.4,274.2 329.4,274.2 339.4,274.2 349.4,274.2 359.4,274.2 369.4,274.2 379.4,274.2 389.4,274.2 399.4,274.2 409.3,274.2 419.3,274.2 429.3,274.2 439.3,271.7 449.3,271.7 459.3,274.2 469.3,274.2 479.3,274.2 489.3,274.2 499.2,274.2 509.2,274.2 519.2,274.2 529.2,274.2 539.2,274.2 549.2,274.2" fill="none" stroke="#1b7af4" stroke-width="1.6"/></svg>
<div style="left:250px;top:267px;width:301px;height:35px;border:1px solid #636363"></div>
<span class="t" style="top:274.6px;font-size:26px;color:#757575;left:567.3px;transform:scaleX(0.934);transform-origin:0 0;-webkit-text-stroke:.3px #757575;">15</span>
<span class="t" style="top:243.4px;font-size:11px;font-weight:bold;color:#757575;left:658.2px;transform:scaleX(0.953);transform-origin:0 0;">Запросы</span>
<svg style="left:659px;top:267px" width="301" height="35" viewBox="659 267 301 35"><defs><pattern id="g659" x="660" y="268" width="4.3" height="4.3" patternUnits="userSpaceOnUse"><rect width="4.3" height="4.3" fill="#fdfdfd"/><path d="M3.8 0V4.3M0 3.8H4.3" stroke="#eeeeee" stroke-width="1"/></pattern></defs><rect x="659" y="267" width="301" height="35" fill="url(#g659)"/><polygon points="658.5,287.1 668.5,272.6 678.5,286.9 688.5,279.5 698.5,274.7 708.5,282.6 718.4,286.0 728.4,273.0 738.4,286.9 748.4,279.5 758.4,288.3 768.4,273.6 778.4,287.1 788.4,278.1 798.4,274.4 808.4,280.9 818.3,286.5 828.3,271.9 838.3,287.4 848.3,278.1 858.3,288.8 868.3,273.0 878.3,285.5 888.3,280.5 898.3,274.0 908.2,281.6 918.2,286.5 928.2,273.3 938.2,286.0 948.2,277.2 958.2,284.2 958.2,302 658.5,302" fill="rgba(98,165,251,.82)"/><polyline points="658.5,287.1 668.5,272.6 678.5,286.9 688.5,279.5 698.5,274.7 708.5,282.6 718.4,286.0 728.4,273.0 738.4,286.9 748.4,279.5 758.4,288.3 768.4,273.6 778.4,287.1 788.4,278.1 798.4,274.4 808.4,280.9 818.3,286.5 828.3,271.9 838.3,287.4 848.3,278.1 858.3,288.8 868.3,273.0 878.3,285.5 888.3,280.5 898.3,274.0 908.2,281.6 918.2,286.5 928.2,273.3 938.2,286.0 948.2,277.2 958.2,284.2" fill="none" stroke="#1b7af4" stroke-width="1.6"/></svg>
<div style="left:659px;top:267px;width:301px;height:35px;border:1px solid #636363"></div>
<span class="t" style="top:274.6px;font-size:26px;color:#757575;left:975.6px;transform:scaleX(0.934);transform-origin:0 0;-webkit-text-stroke:.3px #757575;">871</span>
<span class="t" style="top:299.4px;font-size:11px;font-weight:bold;color:#757575;left:249.2px;transform:scaleX(0.983);transform-origin:0 0;">Исходящий трафик</span>
<svg style="left:250px;top:323px" width="301" height="35" viewBox="250 323 301 35"><defs><pattern id="g250" x="251" y="324" width="4.3" height="4.3" patternUnits="userSpaceOnUse"><rect width="4.3" height="4.3" fill="#fdfdfd"/><path d="M3.8 0V4.3M0 3.8H4.3" stroke="#eeeeee" stroke-width="1"/></pattern></defs><rect x="250" y="323" width="301" height="35" fill="url(#g250)"/><polygon points="249.5,345.2 259.5,329.6 269.5,344.9 279.5,337.0 289.5,331.8 299.4,340.3 309.4,344.0 319.4,330.0 329.4,344.9 339.4,337.0 349.4,346.4 359.4,330.6 369.4,345.2 379.4,335.5 389.4,331.5 399.4,338.5 409.3,344.5 419.3,328.8 429.3,345.5 439.3,335.5 449.3,347.0 459.3,330.0 469.3,343.4 479.3,338.1 489.3,331.1 499.2,339.3 509.2,344.5 519.2,330.3 529.2,344.0 539.2,334.5 549.2,342.0 549.2,358 249.5,358" fill="rgba(98,165,251,.82)"/><polyline points="249.5,345.2 259.5,329.6 269.5,344.9 279.5,337.0 289.5,331.8 299.4,340.3 309.4,344.0 319.4,330.0 329.4,344.9 339.4,337.0 349.4,346.4 359.4,330.6 369.4,345.2 379.4,335.5 389.4,331.5 399.4,338.5 409.3,344.5 419.3,328.8 429.3,345.5 439.3,335.5 449.3,347.0 459.3,330.0 469.3,343.4 479.3,338.1 489.3,331.1 499.2,339.3 509.2,344.5 519.2,330.3 529.2,344.0 539.2,334.5 549.2,342.0" fill="none" stroke="#1b7af4" stroke-width="1.6"/></svg>
<div style="left:250px;top:323px;width:301px;height:35px;border:1px solid #636363"></div>
<span class="t" style="top:324.4px;font-size:26px;color:#757575;left:567.3px;transform:scaleX(0.938);transform-origin:0 0;-webkit-text-stroke:.3px #757575;">102.78</span>
<span class="t" style="top:335.2px;font-size:9.5px;font-weight:bold;color:#757575;left:568.3px;transform:scaleX(1.054);transform-origin:0 0;">Kb/s</span>
<span class="t" style="top:299.4px;font-size:11px;font-weight:bold;color:#757575;left:658.2px;transform:scaleX(0.992);transform-origin:0 0;">Входящий трафик</span>
<svg style="left:659px;top:323px" width="301" height="35" viewBox="659 323 301 35"><defs><pattern id="g659" x="660" y="324" width="4.3" height="4.3" patternUnits="userSpaceOnUse"><rect width="4.3" height="4.3" fill="#fdfdfd"/><path d="M3.8 0V4.3M0 3.8H4.3" stroke="#eeeeee" stroke-width="1"/></pattern></defs><rect x="659" y="323" width="301" height="35" fill="url(#g659)"/><polygon points="658.5,344.0 668.5,329.2 678.5,343.8 688.5,336.2 698.5,331.3 708.5,339.4 718.4,342.9 728.4,329.6 738.4,343.8 748.4,336.2 758.4,345.2 768.4,330.2 778.4,344.0 788.4,334.8 798.4,331.0 808.4,337.7 818.3,343.4 828.3,328.5 838.3,344.3 848.3,334.8 858.3,345.8 868.3,329.6 878.3,342.3 888.3,337.3 898.3,330.6 908.2,338.4 918.2,343.4 928.2,329.9 938.2,342.9 948.2,333.9 958.2,341.0 958.2,358 658.5,358" fill="rgba(98,165,251,.82)"/><polyline points="658.5,344.0 668.5,329.2 678.5,343.8 688.5,336.2 698.5,331.3 708.5,339.4 718.4,342.9 728.4,329.6 738.4,343.8 748.4,336.2 758.4,345.2 768.4,330.2 778.4,344.0 788.4,334.8 798.4,331.0 808.4,337.7 818.3,343.4 828.3,328.5 838.3,344.3 848.3,334.8 858.3,345.8 868.3,329.6 878.3,342.3 888.3,337.3 898.3,330.6 908.2,338.4 918.2,343.4 928.2,329.9 938.2,342.9 948.2,333.9 958.2,341.0" fill="none" stroke="#1b7af4" stroke-width="1.6"/></svg>
<div style="left:659px;top:323px;width:301px;height:35px;border:1px solid #636363"></div>
<span class="t" style="top:324.4px;font-size:26px;color:#757575;left:975.6px;transform:scaleX(0.944);transform-origin:0 0;-webkit-text-stroke:.3px #757575;">32.18</span>
<span class="t" style="top:335.2px;font-size:9.5px;font-weight:bold;color:#757575;left:976.6px;transform:scaleX(1.054);transform-origin:0 0;">Kb/s</span>
</div>
<div id="top-group" class="sec">
<div class="grp" style="left:241px;top:376px;width:825px;height:436px;"></div>
<div class="gt" style="left:247.1px;top:372px;width:22.6px;height:9px;"></div>
<span class="t" style="top:360.6px;font-size:10px;font-weight:bold;left:249.1px;transform:scaleX(0.893);transform-origin:0 0;">ТОП</span>
<div style="left:249px;top:408px;width:807px;height:395px;background:#fff;border:1px solid #8e8f98"></div>
<div class="tab" style="left:251px;top:393px;width:60px;height:16px;"></div>
<span class="t" style="top:384.5px;font-size:10px;left:259.0px;transform:scaleX(0.900);transform-origin:0 0;">Процессы</span>
<div class="tab" style="left:312px;top:393px;width:57px;height:16px;"></div>
<span class="t" style="top:384.5px;font-size:10px;left:321.5px;transform:scaleX(0.915);transform-origin:0 0;">Запросы</span>
<div class="tab" style="left:370px;top:393px;width:106px;height:16px;"></div>
<span class="t" style="top:384.5px;font-size:10px;left:379.2px;transform:scaleX(0.969);transform-origin:0 0;">Открытые таблицы</span>
<div class="tab" style="left:477px;top:393px;width:80px;height:16px;"></div>
<span class="t" style="top:384.5px;font-size:10px;left:485.8px;transform:scaleX(0.958);transform-origin:0 0;">Открытые БД</span>
<div class="tabon" style="left:556px;top:391px;width:62px;height:18px;"></div>
<span class="t" style="top:384.0px;font-size:10px;left:567.4px;transform:scaleX(0.939);transform-origin:0 0;">Команды</span>
<div style="left:259px;top:418px;width:788px;height:375px;background:#fff;border:1px solid #828790"></div>
<div style="left:757px;top:438px;width:1px;height:355px;background:#e4e4e4"></div>
<div style="left:845px;top:438px;width:1px;height:355px;background:#e4e4e4"></div>
<div style="left:901px;top:438px;width:1px;height:355px;background:#e4e4e4"></div>
<div style="left:957px;top:438px;width:1px;height:355px;background:#e4e4e4"></div>
<div style="left:1030px;top:438px;width:1px;height:355px;background:#e4e4e4"></div>
<div style="left:260px;top:449px;width:771px;height:1px;background:#e4e4e4"></div>
<span class="t" style="top:424.5px;font-size:10.3px;left:262.5px;transform:scaleX(0.970);transform-origin:0 0;">drop_table</span>
<span class="t" style="top:424.5px;font-size:10.6px;color:#1a1af2;right:231.7px;transform:scaleX(0.858);transform-origin:100% 0;">13</span>
<span class="t" style="top:424.5px;font-size:10.6px;right:176.4px;transform:scaleX(0.858);transform-origin:100% 0;">0</span>
<span class="t" style="top:424.5px;font-size:10.6px;right:119.7px;transform:scaleX(0.858);transform-origin:100% 0;">0</span>
<div style="left:960px;top:436px;width:1px;height:12.5px;background:#4ba7df;border-radius:0"></div>
<span class="t" style="top:424.5px;font-size:10.6px;left:960.9px;transform:scaleX(0.858);transform-origin:0 0;">0</span>
<div style="left:260px;top:466px;width:771px;height:1px;background:#e4e4e4"></div>
<span class="t" style="top:441.6px;font-size:10.3px;left:262.5px;transform:scaleX(0.958);transform-origin:0 0;">alter_table</span>
<span class="t" style="top:441.6px;font-size:10.6px;color:#1a1af2;right:231.7px;transform:scaleX(0.858);transform-origin:100% 0;">17</span>
<span class="t" style="top:441.6px;font-size:10.6px;right:176.4px;transform:scaleX(0.858);transform-origin:100% 0;">0</span>
<span class="t" style="top:441.6px;font-size:10.6px;right:119.7px;transform:scaleX(0.858);transform-origin:100% 0;">0</span>
<div style="left:960px;top:453px;width:1px;height:12.5px;background:#4ba7df;border-radius:0"></div>
<span class="t" style="top:441.6px;font-size:10.6px;left:960.9px;transform:scaleX(0.858);transform-origin:0 0;">0</span>
<div style="left:260px;top:483px;width:771px;height:1px;background:#e4e4e4"></div>
<span class="t" style="top:458.7px;font-size:10.3px;left:262.5px;transform:scaleX(0.926);transform-origin:0 0;">show_keys</span>
<span class="t" style="top:458.7px;font-size:10.6px;color:#1a1af2;right:231.7px;transform:scaleX(0.858);transform-origin:100% 0;">44</span>
<span class="t" style="top:458.7px;font-size:10.6px;right:176.4px;transform:scaleX(0.858);transform-origin:100% 0;">0</span>
<span class="t" style="top:458.7px;font-size:10.6px;right:119.7px;transform:scaleX(0.858);transform-origin:100% 0;">0</span>
<div style="left:960px;top:470px;width:1px;height:12.5px;background:#4ba7df;border-radius:0"></div>
<span class="t" style="top:458.7px;font-size:10.6px;left:960.9px;transform:scaleX(0.858);transform-origin:0 0;">0</span>
<div style="left:260px;top:500px;width:771px;height:1px;background:#e4e4e4"></div>
<span class="t" style="top:475.9px;font-size:10.3px;left:262.5px;transform:scaleX(0.949);transform-origin:0 0;">show_open_tables</span>
<span class="t" style="top:475.9px;font-size:10.6px;color:#1a1af2;right:231.7px;transform:scaleX(0.858);transform-origin:100% 0;">67</span>
<span class="t" style="top:475.9px;font-size:10.6px;right:176.4px;transform:scaleX(0.858);transform-origin:100% 0;">0</span>
<span class="t" style="top:475.9px;font-size:10.6px;right:119.7px;transform:scaleX(0.858);transform-origin:100% 0;">0</span>
<div style="left:960px;top:487px;width:1px;height:12.5px;background:#4ba7df;border-radius:0"></div>
<span class="t" style="top:475.9px;font-size:10.6px;left:960.9px;transform:scaleX(0.858);transform-origin:0 0;">0</span>
<div style="left:260px;top:517px;width:771px;height:1px;background:#e4e4e4"></div>
<span class="t" style="top:493.0px;font-size:10.3px;left:262.5px;transform:scaleX(0.958);transform-origin:0 0;">show_processlist</span>
<span class="t" style="top:493.0px;font-size:10.6px;color:#1a1af2;right:231.7px;transform:scaleX(0.858);transform-origin:100% 0;">68</span>
<span class="t" style="top:493.0px;font-size:10.6px;right:176.4px;transform:scaleX(0.858);transform-origin:100% 0;">0</span>
<span class="t" style="top:493.0px;font-size:10.6px;right:119.7px;transform:scaleX(0.858);transform-origin:100% 0;">0</span>
<div style="left:960px;top:504px;width:1px;height:12.5px;background:#4ba7df;border-radius:0"></div>
<span class="t" style="top:493.0px;font-size:10.6px;left:960.9px;transform:scaleX(0.858);transform-origin:0 0;">0</span>
<div style="left:260px;top:535px;width:771px;height:1px;background:#e4e4e4"></div>
<span class="t" style="top:510.1px;font-size:10.3px;left:262.5px;transform:scaleX(0.974);transform-origin:0 0;">check</span>
<span class="t" style="top:510.1px;font-size:10.6px;color:#1a1af2;right:231.7px;transform:scaleX(0.858);transform-origin:100% 0;">181</span>
<span class="t" style="top:510.1px;font-size:10.6px;right:176.4px;transform:scaleX(0.858);transform-origin:100% 0;">1</span>
<span class="t" style="top:510.1px;font-size:10.6px;right:119.7px;transform:scaleX(0.858);transform-origin:100% 0;">0</span>
<div style="left:960px;top:522px;width:1px;height:12.5px;background:#4ba7df;border-radius:0"></div>
<span class="t" style="top:510.1px;font-size:10.6px;left:960.9px;transform:scaleX(0.858);transform-origin:0 0;">0</span>
<div style="left:260px;top:552px;width:771px;height:1px;background:#e4e4e4"></div>
<span class="t" style="top:527.2px;font-size:10.3px;left:262.5px;transform:scaleX(0.948);transform-origin:0 0;">show_create_table</span>
<span class="t" style="top:527.2px;font-size:10.6px;color:#1a1af2;right:231.7px;transform:scaleX(0.858);transform-origin:100% 0;">271</span>
<span class="t" style="top:527.2px;font-size:10.6px;right:176.4px;transform:scaleX(0.858);transform-origin:100% 0;">2</span>
<span class="t" style="top:527.2px;font-size:10.6px;right:119.7px;transform:scaleX(0.858);transform-origin:100% 0;">0</span>
<div style="left:960px;top:539px;width:1px;height:12.5px;background:#4ba7df;border-radius:0"></div>
<span class="t" style="top:527.2px;font-size:10.6px;left:960.9px;transform:scaleX(0.858);transform-origin:0 0;">0</span>
<div style="left:260px;top:569px;width:771px;height:1px;background:#e4e4e4"></div>
<span class="t" style="top:544.3px;font-size:10.3px;left:262.5px;transform:scaleX(0.947);transform-origin:0 0;">show_table_status</span>
<span class="t" style="top:544.3px;font-size:10.6px;color:#1a1af2;right:231.7px;transform:scaleX(0.858);transform-origin:100% 0;">271</span>
<span class="t" style="top:544.3px;font-size:10.6px;right:176.4px;transform:scaleX(0.858);transform-origin:100% 0;">2</span>
<span class="t" style="top:544.3px;font-size:10.6px;right:119.7px;transform:scaleX(0.858);transform-origin:100% 0;">0</span>
<div style="left:960px;top:556px;width:1px;height:12.5px;background:#4ba7df;border-radius:0"></div>
<span class="t" style="top:544.3px;font-size:10.6px;left:960.9px;transform:scaleX(0.858);transform-origin:0 0;">0</span>
<div style="left:260px;top:586px;width:771px;height:1px;background:#e4e4e4"></div>
<span class="t" style="top:561.5px;font-size:10.3px;left:262.5px;transform:scaleX(0.969);transform-origin:0 0;">show_triggers</span>
<span class="t" style="top:561.5px;font-size:10.6px;color:#1a1af2;right:231.7px;transform:scaleX(0.858);transform-origin:100% 0;">271</span>
<span class="t" style="top:561.5px;font-size:10.6px;right:176.4px;transform:scaleX(0.858);transform-origin:100% 0;">2</span>
<span class="t" style="top:561.5px;font-size:10.6px;right:119.7px;transform:scaleX(0.858);transform-origin:100% 0;">0</span>
<div style="left:960px;top:573px;width:1px;height:12.5px;background:#4ba7df;border-radius:0"></div>
<span class="t" style="top:561.5px;font-size:10.6px;left:960.9px;transform:scaleX(0.858);transform-origin:0 0;">0</span>
<div style="left:260px;top:603px;width:771px;height:1px;background:#e4e4e4"></div>
<span class="t" style="top:578.6px;font-size:10.3px;left:262.5px;transform:scaleX(0.945);transform-origin:0 0;">create_table</span>
<span class="t" style="top:578.6px;font-size:10.6px;color:#1a1af2;right:231.7px;transform:scaleX(0.858);transform-origin:100% 0;">445</span>
<span class="t" style="top:578.6px;font-size:10.6px;right:176.4px;transform:scaleX(0.858);transform-origin:100% 0;">3</span>
<span class="t" style="top:578.6px;font-size:10.6px;right:119.7px;transform:scaleX(0.858);transform-origin:100% 0;">0</span>
<div style="left:960px;top:590px;width:1px;height:12.5px;background:#4ba7df;border-radius:0"></div>
<span class="t" style="top:578.6px;font-size:10.6px;left:960.9px;transform:scaleX(0.858);transform-origin:0 0;">0</span>
<div style="left:260px;top:620px;width:771px;height:1px;background:#e4e4e4"></div>
<span class="t" style="top:595.7px;font-size:10.3px;left:262.5px;transform:scaleX(1.025);transform-origin:0 0;">optimize</span>
<span class="t" style="top:595.7px;font-size:10.6px;color:#1a1af2;right:231.7px;transform:scaleX(0.858);transform-origin:100% 0;">555</span>
<span class="t" style="top:595.7px;font-size:10.6px;right:176.4px;transform:scaleX(0.858);transform-origin:100% 0;">4</span>
<span class="t" style="top:595.7px;font-size:10.6px;right:119.7px;transform:scaleX(0.858);transform-origin:100% 0;">0</span>
<div style="left:960px;top:607px;width:1px;height:12.5px;background:#4ba7df;border-radius:0"></div>
<span class="t" style="top:595.7px;font-size:10.6px;left:960.9px;transform:scaleX(0.858);transform-origin:0 0;">0</span>
<div style="left:260px;top:637px;width:771px;height:1px;background:#e4e4e4"></div>
<span class="t" style="top:612.8px;font-size:10.3px;left:262.5px;transform:scaleX(0.945);transform-origin:0 0;">show_status</span>
<span class="t" style="top:612.8px;font-size:10.6px;color:#1a1af2;right:231.7px;transform:scaleX(0.858);transform-origin:100% 0;">677</span>
<span class="t" style="top:612.8px;font-size:10.6px;right:176.4px;transform:scaleX(0.858);transform-origin:100% 0;">5</span>
<span class="t" style="top:612.8px;font-size:10.6px;right:119.7px;transform:scaleX(0.858);transform-origin:100% 0;">0</span>
<div style="left:960px;top:624px;width:1px;height:12.5px;background:#4ba7df;border-radius:0"></div>
<span class="t" style="top:612.8px;font-size:10.6px;left:960.9px;transform:scaleX(0.858);transform-origin:0 0;">0</span>
<div style="left:260px;top:654px;width:771px;height:1px;background:#e4e4e4"></div>
<span class="t" style="top:629.9px;font-size:10.3px;left:262.5px;transform:scaleX(0.962);transform-origin:0 0;">show_fields</span>
<span class="t" style="top:629.9px;font-size:10.6px;color:#1a1af2;right:231.7px;transform:scaleX(0.858);transform-origin:100% 0;">694</span>
<span class="t" style="top:629.9px;font-size:10.6px;right:176.4px;transform:scaleX(0.858);transform-origin:100% 0;">5</span>
<span class="t" style="top:629.9px;font-size:10.6px;right:119.7px;transform:scaleX(0.858);transform-origin:100% 0;">0</span>
<div style="left:960px;top:641px;width:1px;height:12.5px;background:#4ba7df;border-radius:0"></div>
<span class="t" style="top:629.9px;font-size:10.6px;left:960.9px;transform:scaleX(0.858);transform-origin:0 0;">0</span>
<div style="left:260px;top:671px;width:771px;height:1px;background:#e4e4e4"></div>
<span class="t" style="top:647.1px;font-size:10.3px;left:262.5px;">truncate</span>
<span class="t" style="top:647.1px;font-size:10.6px;color:#1a1af2;right:231.7px;transform:scaleX(0.858);transform-origin:100% 0;">247780</span>
<span class="t" style="top:647.1px;font-size:10.6px;right:176.4px;transform:scaleX(0.858);transform-origin:100% 0;">2076</span>
<span class="t" style="top:647.1px;font-size:10.6px;right:119.7px;transform:scaleX(0.858);transform-origin:100% 0;">0,5</span>
<div style="left:960px;top:658px;width:1px;height:12.5px;background:#4ba7df;border-radius:0"></div>
<span class="t" style="top:647.1px;font-size:10.6px;left:960.9px;transform:scaleX(0.858);transform-origin:0 0;">0</span>
<div style="left:260px;top:689px;width:771px;height:1px;background:#e4e4e4"></div>
<span class="t" style="top:664.2px;font-size:10.3px;left:262.5px;transform:scaleX(0.957);transform-origin:0 0;">change_db</span>
<span class="t" style="top:664.2px;font-size:10.6px;color:#1a1af2;right:231.7px;transform:scaleX(0.858);transform-origin:100% 0;">298530</span>
<span class="t" style="top:664.2px;font-size:10.6px;right:176.4px;transform:scaleX(0.858);transform-origin:100% 0;">2501</span>
<span class="t" style="top:664.2px;font-size:10.6px;right:119.7px;transform:scaleX(0.858);transform-origin:100% 0;">0,6</span>
<div style="left:960px;top:676px;width:1px;height:12.5px;background:#4ba7df;border-radius:0"></div>
<span class="t" style="top:664.2px;font-size:10.6px;left:960.9px;transform:scaleX(0.858);transform-origin:0 0;">0</span>
<div style="left:260px;top:706px;width:771px;height:1px;background:#e4e4e4"></div>
<span class="t" style="top:681.3px;font-size:10.3px;left:262.5px;transform:scaleX(0.980);transform-origin:0 0;">set_option</span>
<span class="t" style="top:681.3px;font-size:10.6px;color:#1a1af2;right:231.7px;transform:scaleX(0.858);transform-origin:100% 0;">1790877</span>
<span class="t" style="top:681.3px;font-size:10.6px;right:176.4px;transform:scaleX(0.858);transform-origin:100% 0;">15005</span>
<span class="t" style="top:681.3px;font-size:10.6px;right:119.7px;transform:scaleX(0.858);transform-origin:100% 0;">4,1</span>
<div style="left:960px;top:693px;width:1px;height:12.5px;background:#4ba7df;border-radius:0"></div>
<span class="t" style="top:681.3px;font-size:10.6px;left:960.9px;transform:scaleX(0.858);transform-origin:0 0;">1</span>
<div style="left:260px;top:723px;width:771px;height:1px;background:#e4e4e4"></div>
<span class="t" style="top:698.4px;font-size:10.3px;left:262.5px;transform:scaleX(0.959);transform-origin:0 0;">replace</span>
<span class="t" style="top:698.4px;font-size:10.6px;color:#1a1af2;right:231.7px;transform:scaleX(0.858);transform-origin:100% 0;">6625865</span>
<span class="t" style="top:698.4px;font-size:10.6px;right:176.4px;transform:scaleX(0.858);transform-origin:100% 0;">55518</span>
<span class="t" style="top:698.4px;font-size:10.6px;right:119.7px;transform:scaleX(0.858);transform-origin:100% 0;">15,4</span>
<div style="left:960px;top:710px;width:3.5px;height:12.5px;background:#4ba7df;border-radius:2px"></div>
<span class="t" style="top:698.4px;font-size:10.6px;left:960.9px;transform:scaleX(0.858);transform-origin:0 0;">5</span>
<div style="left:260px;top:740px;width:771px;height:1px;background:#e4e4e4"></div>
<span class="t" style="top:715.5px;font-size:10.3px;left:262.5px;transform:scaleX(0.969);transform-origin:0 0;">insert</span>
<span class="t" style="top:715.5px;font-size:10.6px;color:#1a1af2;right:231.7px;transform:scaleX(0.858);transform-origin:100% 0;">7552307</span>
<span class="t" style="top:715.5px;font-size:10.6px;right:176.4px;transform:scaleX(0.858);transform-origin:100% 0;">63280</span>
<span class="t" style="top:715.5px;font-size:10.6px;right:119.7px;transform:scaleX(0.858);transform-origin:100% 0;">17,5</span>
<div style="left:960px;top:727px;width:3.5px;height:12.5px;background:#4ba7df;border-radius:2px"></div>
<span class="t" style="top:715.5px;font-size:10.6px;left:960.9px;transform:scaleX(0.858);transform-origin:0 0;">5</span>
<div style="left:260px;top:757px;width:771px;height:1px;background:#e4e4e4"></div>
<span class="t" style="top:732.7px;font-size:10.3px;left:262.5px;transform:scaleX(0.976);transform-origin:0 0;">delete</span>
<span class="t" style="top:732.7px;font-size:10.6px;color:#1a1af2;right:231.7px;transform:scaleX(0.858);transform-origin:100% 0;">9913387</span>
<span class="t" style="top:732.7px;font-size:10.6px;right:176.4px;transform:scaleX(0.858);transform-origin:100% 0;">83064</span>
<span class="t" style="top:732.7px;font-size:10.6px;right:119.7px;transform:scaleX(0.858);transform-origin:100% 0;">23</span>
<div style="left:960px;top:744px;width:5px;height:12.5px;background:#4ba7df;border-radius:2px"></div>
<span class="t" style="top:732.7px;font-size:10.6px;left:960.9px;transform:scaleX(0.858);transform-origin:0 0;">7</span>
<div style="left:260px;top:774px;width:771px;height:1px;background:#e4e4e4"></div>
<span class="t" style="top:749.8px;font-size:10.3px;left:262.5px;transform:scaleX(0.994);transform-origin:0 0;">update</span>
<span class="t" style="top:749.8px;font-size:10.6px;color:#1a1af2;right:231.7px;transform:scaleX(0.858);transform-origin:100% 0;">15343083</span>
<span class="t" style="top:749.8px;font-size:10.6px;right:176.4px;transform:scaleX(0.858);transform-origin:100% 0;">128559</span>
<span class="t" style="top:749.8px;font-size:10.6px;right:119.7px;transform:scaleX(0.858);transform-origin:100% 0;">35,7</span>
<div style="left:960px;top:761px;width:7.4px;height:12.5px;background:#4ba7df;border-radius:2px"></div>
<span class="t" style="top:749.8px;font-size:10.6px;left:960.9px;transform:scaleX(0.858);transform-origin:0 0;">11</span>
<span class="t" style="top:766.9px;font-size:10.3px;left:262.5px;transform:scaleX(0.933);transform-origin:0 0;">select</span>
<span class="t" style="top:766.9px;font-size:10.6px;color:#1a1af2;right:231.7px;transform:scaleX(0.858);transform-origin:100% 0;">102131618</span>
<span class="t" style="top:766.9px;font-size:10.6px;right:176.4px;transform:scaleX(0.858);transform-origin:100% 0;">855761</span>
<span class="t" style="top:766.9px;font-size:10.6px;right:119.7px;transform:scaleX(0.858);transform-origin:100% 0;">237,7</span>
<div style="left:960px;top:778px;width:48.8px;height:12.5px;background:#4ba7df;border-radius:2px"></div>
<span class="t" style="top:766.9px;font-size:10.6px;left:960.9px;transform:scaleX(0.858);transform-origin:0 0;">71</span>
<div style="left:260px;top:419px;width:771px;height:19px;background:linear-gradient(#fff 0,#fff 45%,#f3f4f5 55%,#f0f1f2 100%);border-bottom:1px solid #d5d5d5"></div>
<div style="left:757px;top:419px;width:89px;height:19px;background:linear-gradient(#f2f9fd 0,#e4f2fb 45%,#d5ebf8 55%,#d0e8f7 100%);border:1px solid #9acfee;border-top:none"></div>
<svg style="left:797px;top:419px" width="9" height="5" viewBox="0 0 9 5"><path d="M0.500 4.500L4.500 .8l4 3.700z" fill="#9fb6c8"/></svg>
<div style="left:901px;top:419px;width:1px;height:18px;background:#e2e3e5"></div>
<div style="left:957px;top:419px;width:1px;height:18px;background:#e2e3e5"></div>
<div style="left:1030px;top:419px;width:1px;height:18px;background:#e2e3e5"></div>
<span class="t" style="top:413.0px;font-size:10.3px;left:488.1px;transform:scaleX(0.975);transform-origin:0 0;">Команда</span>
<span class="t" style="top:413.0px;font-size:10.3px;left:773.6px;transform:scaleX(1.007);transform-origin:0 0;">Количество</span>
<span class="t" style="top:413.0px;font-size:10.3px;left:861.9px;transform:scaleX(0.935);transform-origin:0 0;">В час</span>
<span class="t" style="top:413.0px;font-size:10.3px;left:918.0px;transform:scaleX(0.952);transform-origin:0 0;">В сек</span>
<span class="t" style="top:413.0px;font-size:10.3px;left:974.0px;transform:scaleX(1.005);transform-origin:0 0;">Процент</span>
<div style="left:1031px;top:419px;width:15px;height:373px;background:#f0f0f0;border-left:1px solid #e6e6e6"></div>
<svg style="left:1036px;top:424px" width="7" height="5" viewBox="0 0 7 5"><path d="M0.300 4.300L3.300 1l3 3.300z" fill="#404040"/></svg>
<svg style="left:1036px;top:783px" width="7" height="5" viewBox="0 0 7 5"><path d="M0.300 1L3.300 4.300l3-3.300z" fill="#404040"/></svg>
<div style="left:1032px;top:731px;width:13px;height:46px;border:1px solid #979797;border-radius:2px;background:linear-gradient(to right,#f6f6f6 0,#ececec 45%,#dcdcdc 55%,#d2d2d2 100%);box-shadow:inset 0 0 0 1px rgba(255,255,255,.7)"></div>
<div style="left:1036px;top:750.5px;width:6px;height:1px;background:#7a7a7a"></div>
<div style="left:1036px;top:753.1px;width:6px;height:1px;background:#7a7a7a"></div>
<div style="left:1036px;top:755.7px;width:6px;height:1px;background:#7a7a7a"></div>
</div>
</body></html>
